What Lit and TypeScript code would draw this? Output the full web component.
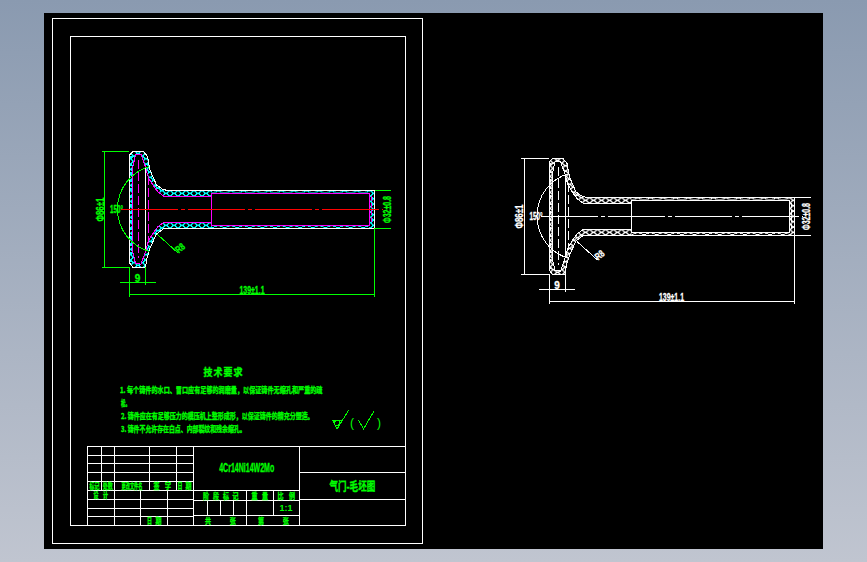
import { LitElement, html, svg, css } from 'lit';
import { customElement } from 'lit/decorators.js';

type Palette = { id: string; outer: string; inner: string; hatch: string; dim: string; axis: string };

const LEFT: Palette = { id: 'a', outer: '#fff', inner: '#f0f', hatch: '#0ff', dim: '#0f0', axis: '#f00' };
const RIGHT: Palette = { id: 'b', outer: '#fff', inner: '#fff', hatch: '#fff', dim: '#fff', axis: '#fff' };

const MID = 209.3;
const flip = (y: number) => +(2 * MID - y).toFixed(1);

// half profiles, top side, left to right
const OUTER_TOP: number[][] = [[129.5, 155], [133, 151.5], [143.5, 151.5], [147.5, 156.5], [150, 170], [156.5, 185], [163, 189.5], [168, 190.5]];
const INNER_TOP: number[][] = [[132.5, 168], [135.5, 155], [141, 154.5], [145, 165.5], [148.5, 178], [153.5, 186], [158, 192], [163.5, 196]];

const outerPath = () => {
  const top = OUTER_TOP.map((p) => p.join(',')).join(' L');
  const low = [[168, 228.5], [163, 229], [156.5, 234], [150, 248], [147, 258], [145.5, 267.5], [133, 267.5], [129.5, 263]]
    .map((p) => p.join(','))
    .join(' L');
  return `M${top} L374.5,190.5 L374.5,228.5 L${low} Z`;
};

const innerPath = () => {
  const top = INNER_TOP.map((p) => p.join(',')).join(' L');
  const low = [...INNER_TOP].reverse().map((p) => `${p[0]},${flip(p[1])}`).join(' L');
  return `M${top} L211.5,196 L211.5,193.5 L369.5,193.5 L369.5,225.5 L211.5,225.5 L211.5,222.5 L${low} Z`;
};

// dashes written out so the long and short strokes land where they do in the drawing
const dashH = (from: number, to: number, y: number) => {
  let d = '';
  for (let x = from; x < to; x += 67) {
    d += `M${x},${y} H${Math.min(x + 57, to)} `;
    if (x + 60 < to) d += `M${x + 60},${y} H${Math.min(x + 64, to)} `;
  }
  return d;
};
const dashV = (x: number, from: number, to: number, len = 9, gap = 3) => {
  let d = '';
  for (let y = from; y < to; y += len + gap) d += `M${x},${y} V${Math.min(y + len, to)} `;
  return d;
};

const studs = Array.from({ length: 14 }, (_, i) => 156 + i * 8);

const part = (c: Palette) => svg`
  <defs>
    <pattern id="x-${c.id}" patternUnits="userSpaceOnUse" x="130" y="190.7" width="8" height="5.33">
      <path class="crisp" d="M0,0 L8,5.33 M8,0 L0,5.33" stroke=${c.hatch} fill="none"></path>
    </pattern>
    <pattern id="z-${c.id}" patternUnits="userSpaceOnUse" x="212" y="190.7" width="12.6" height="2.66">
      <path class="crisp" d="M0,2.66 L6.3,0 L12.6,2.66" stroke=${c.hatch} fill="none"></path>
    </pattern>
  </defs>
  <path class="wall" d="${outerPath()} ${innerPath()}" fill="url(#x-${c.id})"></path>
  <rect class="wall-mask" x="212" y="190.9" width="157" height="2.6"></rect>
  <rect class="wall-mask" x="212" y="225.5" width="157" height="2.6"></rect>
  <rect x="212" y="190.9" width="157" height="2.6" fill="url(#z-${c.id})"></rect>
  <rect x="212" y="225.5" width="157" height="2.6" fill="url(#z-${c.id})"></rect>
  ${studs.map((y) => svg`<rect x="130" y=${y} width="2" height="2" fill=${c.hatch}></rect>`)}

  <path class="line" d=${innerPath()} stroke=${c.inner}></path>
  <path class="line" d="M211.5,193.5 V225.5" stroke=${c.inner}></path>
  <path class="line" d="${dashV(138.5, 160, 258)} ${dashV(148.5, 176, 243)} ${dashV(371.5, 196, 223, 5, 2)}" stroke=${c.inner}></path>
  <path class="line" d=${outerPath()} stroke=${c.outer}></path>
  <path class="line" d="M145.5,168 V251" stroke=${c.outer}></path>
  <path class="line" d=${dashH(121, 383, 209.5)} stroke=${c.axis}></path>

  <g stroke=${c.dim}>
    <path class="line" d="M101.5,151.5 H129 M101.5,267.5 H129 M104.5,151.5 V267.5"></path>
    <path class="line" d="M149.5,166.5 A44.2,44.2 0 0 0 149.5,251.5"></path>
    <path class="line" d="M119.5,282.5 H155.5 M129.5,267 V297 M145.5,267 V285"></path>
    <path class="line" d="M129.5,294.5 H374.5 M374.5,228 V297"></path>
    <path class="line" d="M374.5,190.5 H391 M374.5,228.5 H391"></path>
    <path class="line" d="M157.5,234.5 L178,253"></path>
  </g>
  <g fill=${c.dim} stroke=${c.dim}>
    <text class="t" x="100" y="209.5" text-anchor="middle" transform="rotate(-90 100 209.5)" textLength="24" lengthAdjust="spacingAndGlyphs">Φ86±1</text>
    <text class="t" x="116.5" y="209.5" text-anchor="middle" textLength="13" lengthAdjust="spacingAndGlyphs">150°</text>
    <text class="t" x="137.5" y="278" text-anchor="middle">9</text>
    <text class="t" x="252" y="290" text-anchor="middle" textLength="25" lengthAdjust="spacingAndGlyphs">139±1.1</text>
    <text class="t" x="387" y="209.5" text-anchor="middle" transform="rotate(-90 387 209.5)" textLength="27" lengthAdjust="spacingAndGlyphs">Φ32±0.8</text>
    <text class="t" x="180" y="248" text-anchor="middle" transform="rotate(-40 180 248)" textLength="9" lengthAdjust="spacingAndGlyphs">R8</text>
  </g>
`;

const HLINES = [
  'M87.5,446.5 H405', 'M87.5,455.5 H193', 'M87.5,463.5 H193', 'M87.5,472.5 H193', 'M87.5,481.5 H193',
  'M87.5,490.5 H299', 'M87.5,499.5 H193', 'M87.5,508.5 H193', 'M87.5,516.5 H193',
  'M193,500.5 H299', 'M193,515.5 H299', 'M299,472.5 H405', 'M299,499.5 H405',
];
const VLINES = [
  'M87.5,446 V525', 'M101.5,446 V490', 'M114.5,446 V525', 'M149.5,446 V490', 'M176.5,446 V490',
  'M140.5,490 V525', 'M167.5,490 V525', 'M193.5,446 V525', 'M246.5,490 V525', 'M273.5,490 V515',
  'M207.5,500 V515', 'M220.5,500 V515', 'M233.5,500 V515', 'M299.5,446 V525',
];

// [centre x, centre y, text, squeezed width]
const CELLS: [number, number, string, number][] = [
  [94.5, 485.8, '标记', 10], [107.8, 485.8, '处数', 10], [132, 485.8, '更改文件名', 21],
  [156.5, 485.8, '签', 6], [168, 485.8, '字', 6], [180, 485.8, '日', 5], [188.5, 485.8, '期', 6],
  [96, 494.8, '设', 5], [105.5, 494.8, '计', 5], [149.5, 520.8, '日', 5], [158.5, 520.8, '期', 6],
  [206, 495.3, '阶', 6], [216, 495.3, '段', 6], [226, 495.3, '标', 6], [235.5, 495.3, '记', 6],
  [254.5, 495.3, '重', 6], [265, 495.3, '量', 6], [280.5, 495.3, '比', 6], [292, 495.3, '例', 6],
  [208, 520.8, '共', 6], [232.7, 520.8, '张', 6], [261, 520.8, '第', 6], [285.7, 520.8, '张', 6],
];

// the drawing's font is narrow, so CJK text is scaled to the width it has there
const natural = (s: string, size: number) =>
  [...s].reduce((n, ch) => n + (ch.charCodeAt(0) > 255 ? size : size * 0.5), 0);

const cn = (x: number, y: number, s: string, w: number, anchor = 'middle', size = 8) => {
  const k = (w / natural(s, size)).toFixed(3);
  return svg`<text class="cn" font-size=${size} transform="translate(${x} ${y}) scale(${k} 1)" text-anchor=${anchor}>${s}</text>`;
};

@customElement('app-root')
export class AppRoot extends LitElement {
  static styles = css`
    :host {
      display: block;
      height: 562px;
      background: linear-gradient(#8a9ab0, #c0c5d0);
      padding: 13px 44px;
      box-sizing: border-box;
      overflow: hidden;
    }
    .sheet {
      display: block;
      width: 779px;
      height: 536px;
      background: #000;
    }
    .line {
      fill: none;
      stroke-width: 1;
      shape-rendering: crispEdges;
    }
    .white {
      stroke: #fff;
    }
    .crisp {
      shape-rendering: crispEdges;
    }
    .wall {
      fill-rule: evenodd;
    }
    .wall-mask {
      fill: #000;
    }
    .t {
      font: 700 10px 'Liberation Sans', sans-serif;
      stroke-width: 0.3;
      dominant-baseline: central;
    }
    .cn {
      font-family: 'Noto Sans CJK SC', sans-serif;
      font-weight: 700;
      fill: #0f0;
      stroke: #0f0;
      stroke-width: 0.35;
      dominant-baseline: central;
    }
    .thin {
      font: 400 12px 'Liberation Sans', sans-serif;
      fill: #0f0;
      dominant-baseline: central;
    }
    .mat {
      font: 700 12px 'Liberation Sans', sans-serif;
      fill: #0f0;
      stroke: #0f0;
      stroke-width: 0.3;
      dominant-baseline: central;
    }
    .ratio {
      font: 700 9px 'Liberation Sans', sans-serif;
      fill: #0f0;
      dominant-baseline: central;
    }
  `;

  render() {
    return html`
      <svg class="sheet" viewBox="44 13 779 536" xmlns="http://www.w3.org/2000/svg">
        <rect class="line white" x="52.5" y="18.5" width="370" height="525"></rect>
        <rect class="line white" x="70.5" y="36.5" width="335" height="489"></rect>

        ${part(LEFT)}
        <g transform="translate(419.5 7)">${part(RIGHT)}</g>

        ${cn(208, 371.5, '技', 9, 'middle', 10)}
        ${cn(218, 371.5, '术', 9, 'middle', 10)}
        ${cn(228, 371.5, '要', 9, 'middle', 10)}
        ${cn(238, 371.5, '求', 9, 'middle', 10)}
        ${cn(120, 390, '1. 每个铸件的水口、冒口应有足够的润磨量，以保证铸件无缩孔和严重的疏', 205, 'start')}
        ${cn(121, 402.7, '松。', 9, 'start')}
        ${cn(121, 415.7, '2. 铸件应在有足够压力的模压机上整形成形，以保证铸件的精充分塑造。', 195, 'start')}
        ${cn(121, 429, '3. 铸件不允许存在白点、内部裂纹和残余缩孔。', 127, 'start')}

        <g stroke="#0f0">
          <path class="line" d="M332.5,420 L337,429 L348.5,410.5 M332.5,420 H342"></path>
          <circle class="line" cx="337" cy="423" r="2.5"></circle>
          <path class="line" d="M358.5,420 L363.5,429 L374,411"></path>
        </g>
        <text class="thin" x="352" y="423" text-anchor="middle">(</text>
        <text class="thin" x="379" y="423" text-anchor="middle">)</text>

        ${HLINES.concat(VLINES).map((d) => svg`<path class="line white" d=${d}></path>`)}
        ${CELLS.map(([x, y, s, w]) => cn(x, y, s, w))}
        <text class="mat" x="246.7" y="468.3" text-anchor="middle" textLength="55" lengthAdjust="spacingAndGlyphs">4Cr14Ni14W2Mo</text>
        ${cn(352.3, 486, '气门-毛坯图', 47, 'middle', 12)}
        <text class="ratio" x="286" y="508" text-anchor="middle">1:1</text>
      </svg>
    `;
  }
}
